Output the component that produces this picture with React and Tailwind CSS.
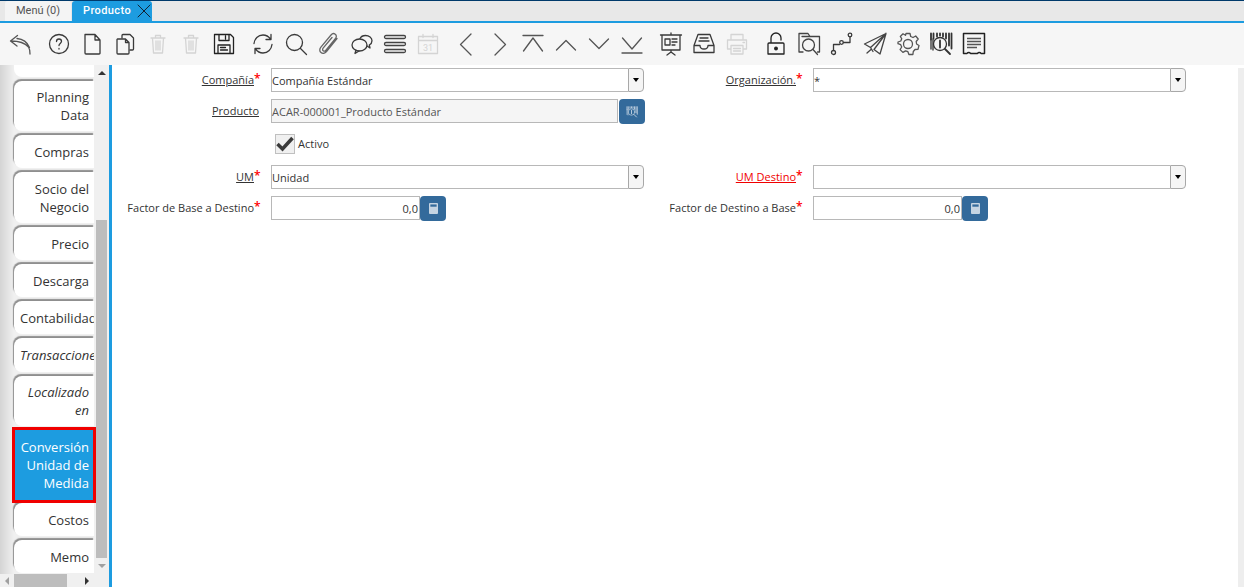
import React from "react";

const S = { fill: "none", stroke: "currentColor", strokeWidth: 1.3, strokeLinecap: "round", strokeLinejoin: "round" };

const Svg = ({ children, className = "text-[#3a3a3a]" }) => (
  <svg viewBox="0 0 24 24" className={`w-6 h-6 ${className}`} {...S}>
    {children}
  </svg>
);

const Trash = () => (
  <Svg className="text-[#d4d4d4]">
    <path d="M5 6h14M9.500 6V3.500h5V6M6.500 6l1 15h9l1-15M10 9v9M12 9v9M14 9v9" />
  </Svg>
);

const icons = {
  undo: <Svg className="text-[#555]"><path d="M9.500 3.500 2.500 9l6.500 5M3 9c8 0 14 2 17.500 6 1 1.500 1.500 5 1.500 7M9 6.500c6 .5 10 3 12.500 9" /></Svg>,
  help: <Svg><circle cx="12" cy="12" r="9.500" /><path d="M9.500 9.500C9.500 7.800 10.800 7 12 7s2.500.9 2.500 2.300c0 2-2.500 2.200-2.500 4.200" /><path d="M12 16.500v.5" /></Svg>,
  file: <Svg><path d="M5 2.500h10L20 8v13a.9.9 0 0 1-1 1H6a1 1 0 0 1-1-1zM15 2.500V8h5" /></Svg>,
  copy: <Svg><path d="M9 6V3.500a1 1 0 0 1 1-1h7l3.500 3.500v11a1 1 0 0 1-1 1H17" /><path d="M4.500 7h8L16 10.500V21a1 1 0 0 1-1 1H5a1 1 0 0 1-1-1V7.500zM12.500 7v3.500H16" /></Svg>,
  trash: <Trash />,
  save: <Svg className="text-[#222]"><path d="M2.500 2.500h16l3 3v16h-19zM7 2.500v6h10v-6M13.500 4v3M6 21.500V13h12v8.500M8.500 15.500h5M8.500 18h7" /></Svg>,
  refresh: <Svg><path d="M3 11.500C3.500 7 7 3 12 3c3 0 5.500 1.300 7.500 4M20 2.500V7.500h-5M21 12.500c-.5 4.500-4 8.500-9 8.500-3 0-5.500-1.300-7.500-4M4 21.500V16.500h5" /></Svg>,
  search: <Svg><circle cx="10.500" cy="10.500" r="8" /><path d="m16.500 16.500 6 6" /></Svg>,
  clip: <Svg className="text-[#666]"><path d="M20 6.500 9.500 19.500c-1.600 2-4 2.300-5.500 1.100s-1.700-3.500-.1-5.500L14 3c1.200-1.500 3-1.800 4.300-.8s1.400 2.800.2 4.300L8.700 18.300c-.7.900-1.800 1-2.500.5s-.8-1.700-.1-2.600L15 5.500" /></Svg>,
  chat: <Svg><ellipse cx="9.500" cy="13" rx="7.500" ry="6" /><path d="m6 18-1 3.500 4-2.500M10 6.500C11 4.500 13 3.500 15.500 3.500c3.600 0 6.500 2.300 6.500 5.200 0 1.900-1 3.300-2.700 4.300l.7 3-3-2" /></Svg>,
  lines: <Svg className="text-[#444]"><rect x="1.500" y="3.500" width="21" height="3" rx="1.500" /><rect x="1.500" y="10.500" width="21" height="3" rx="1.500" /><rect x="1.500" y="17.500" width="21" height="3" rx="1.500" /></Svg>,
  calendar: <Svg className="text-[#d4d4d4]"><path d="M2.500 4.500h19v17h-19zM2.500 8.500h19M7 2.500v3M17 2.500v3" /><text x="12" y="19" fontSize="9" textAnchor="middle" fill="currentColor" stroke="none" fontFamily="Roboto, sans-serif">31</text></Svg>,
  prev: <Svg className="text-[#555]"><path d="M16 2 5.500 12.500 16 23" /></Svg>,
  next: <Svg className="text-[#555]"><path d="M7 2l10.500 10.500L7 23" /></Svg>,
  first: <Svg className="text-[#555]"><path d="M2 3.500h20M2.500 19 12 6l9.500 13" /></Svg>,
  up: <Svg className="text-[#555]"><path d="M2.500 18 12 8.500l9.500 9.500" /></Svg>,
  down: <Svg className="text-[#555]"><path d="M2.500 7 12 16.500 21.500 7" /></Svg>,
  last: <Svg className="text-[#555]"><path d="M2.500 6 12 17l9.500-11M2 21h20" /></Svg>,
  present: <Svg><path d="M1.500 3h21M3 3v15h18V3M12 1v2M12 18v2M8 23l4-3 4 3" /><path d="M6 7h5v6H6zM13 7h5M13 10h5M13 13h3" /></Svg>,
  archive: <Svg><path d="M6 2.500h12l4 11v7H2v-7zM2 13.500h6c0 2 1.500 3.500 4 3.500s4-1.500 4-3.500h6M8 6h8M7 9h10" /></Svg>,
  print: <Svg className="text-[#d4d4d4]"><path d="M6 8V2.500h12V8M6 17H2.500V8h19v9H18M6 13.500h12V22H6zM8.500 16.500h7M8.500 19h7M18 10.500h1.500" /></Svg>,
  lock: <Svg className="text-[#222]"><path d="M5 11h14a1 1 0 0 1 1 1v10H4V12a1 1 0 0 1 1-1zM7 11V6a5 5 0 0 1 10 0v2" /><circle cx="12" cy="16.500" r="1.300" fill="currentColor" /></Svg>,
  folder: <Svg className="text-[#444]"><path d="M6 20H2V1.500h9l2 3h9.500V20h-2M5 4.500h8" /><circle cx="11.500" cy="13" r="6" /><path d="m16 17.500 4.500 5" /></Svg>,
  route: <Svg><circle cx="3.500" cy="20.500" r="2" /><circle cx="11.500" cy="10.500" r="1.800" /><circle cx="20" cy="3" r="1.800" /><path d="M3.500 18.500V12.500h6M13.500 10.500H20V5" /></Svg>,
  send: <Svg className="text-[#444]"><path d="M23 1.500 1.500 12l6 3.500 2.500 4M23 1.500 17 22l-6-4.500M23 1.500 7.500 15.500M23 1.500 11 17.500M4 21l4-3.500" /></Svg>,
  gear: <Svg className="text-[#555]"><circle cx="12" cy="12" r="4.500" /><path d="M10 1.500h4l.7 3 2.300 1 2.700-1.500 2.500 3-2 2.500.4 2.500 2.400 1.500-1 3.800-3 .2-1.700 2-.4 3h-4l-1-2.800-2.300-.8-2.700 1.500-2.800-2.800 1.600-2.600-1-2.300-2.700-1V10l2.800-1 .9-2.300L4.300 4.500 7 1.800l2.500 1.500z" /></Svg>,
  barcode: <Svg className="text-[#333]"><path d="M2 1.500v6M4.500 1.500v5M8 1.500v3M11 1.500v2M14 1.500v3M17 1.500v5M20 1.500v12M22.500 1.500v15" strokeWidth="1.800" /><path d="M2 8v9M4 7v11" /><circle cx="11" cy="12" r="6.500" /><path d="M11 8.500v7M16 17l5 5" strokeWidth="1.800" /></Svg>,
  receipt: <Svg className="text-[#222]"><path d="M1.500 1.500h21v20h-3.500a2 2 0 0 0-3.500 0h-7a2 2 0 0 0-3.500 0H1.500z" strokeWidth="1.500" /><path d="M5 6.500h14M5 9.500h14M5 12.500h14M5 15.500h10" strokeWidth="1.700" strokeLinecap="butt" className="text-[#555]" /></Svg>,
};

const groups = [
  ["undo"],
  ["help", "file", "copy", "trash", "trash", "save"],
  ["refresh", "search", "clip", "chat", "lines", "calendar"],
  ["prev", "next", "first", "up", "down", "last"],
  ["present", "archive", "print"],
  ["lock", "folder", "route", "send", "gear", "barcode", "receipt"],
];

const tabs = [
  { h: "h-[50px]", t: "Planning\nData" },
  { h: "h-[33px]", t: "Compras" },
  { h: "h-[51px]", t: "Socio del\nNegocio" },
  { h: "h-[33px]", t: "Precio" },
  { h: "h-[33px]", t: "Descarga" },
  { h: "h-[33px]", t: "Contabilidad", clip: true },
  { h: "h-[34px]", t: "Transacciones", clip: true, it: true },
  { h: "h-[50px]", t: "Localizado\nen", it: true },
];

const Tab = ({ h, t, clip, it }) => (
  <div
    className={`${h} shrink-0 mr-[2px] bg-white rounded-l-lg shadow-[-1px_-2px_1px_#8f8f8f] flex items-center overflow-hidden leading-[18px] text-[13px] text-[#333] ${clip ? "pl-[6px] whitespace-nowrap justify-start" : "whitespace-pre-line pr-[5px] justify-end text-right"} ${it ? "italic" : ""}`}
  >
    <span className="shrink-0">{t}</span>
  </div>
);

const Caret = () => (
  <div className="w-4 h-full shrink-0 bg-[#f5f5f5] border border-[#a8a8a8] rounded-r-[4px] flex items-center justify-center">
    <div className="w-0 h-0 border-x-[3px] border-x-transparent border-t-[4px] border-t-black" />
  </div>
);

const Combo = ({ value }) => (
  <div className="h-6 flex">
    <div className="flex-1 border border-[#b8b8b8] border-r-0 bg-white pt-[3px] text-[11px] text-[#333] flex items-center">{value}</div>
    <Caret />
  </div>
);

const Label = ({ children, link, red, star = true }) => (
  <div className={`h-6 flex items-center justify-end text-[11px] text-[#333] ${star ? "pr-[5px]" : ""}`}>
    <span className={`${link ? "underline" : ""} ${red ? "text-[#f00000]" : ""}`}>{children}</span>
    {star && <span className="w-0 text-[#f00] text-[12px] font-semibold leading-none -mt-[3px]">*</span>}
  </div>
);

const Calc = () => (
  <svg viewBox="0 0 10 12" className="w-[9px] h-[11px]">
    <rect width="10" height="12" rx="1" fill="#c5d4e2" />
    <rect x="1.500" y="1.500" width="7" height="2.500" fill="#336a9b" />
  </svg>
);

const Num = () => (
  <div className="h-6 flex">
    <div className="w-[149px] border border-[#b8b8b8] bg-white pr-[1px] pt-[3px] text-[11px] text-[#333] flex items-center justify-end">0,0</div>
    <div className="w-[26px] h-[25px] bg-[#336a9b] rounded-[4px] flex items-center justify-center"><Calc /></div>
  </div>
);

export default function App() {
  return (
    <div className="w-[1244px] h-[587px] overflow-hidden flex flex-col bg-white font-['Open_Sans',sans-serif] border-t border-[#003a6b]">
      {/* tabs */}
      <div className="h-[22px] shrink-0 bg-[#e8e8e8] border-b-2 border-[#1d9ce0] flex items-end pl-[5px] gap-[1px] font-['Roboto',sans-serif] text-[11px]">
        <div className="w-[66px] h-[20px] bg-[#f4f4f4] rounded-t-[3px] text-[#555] flex items-center justify-center">Menú (0)</div>
        <div className="w-[80px] h-[20px] bg-[#1d9ce0] rounded-t-[3px] text-white font-medium flex items-center pl-[11px] tracking-[0.4px]">
          Producto
          <svg viewBox="0 0 14 14" className="w-[14px] h-[14px] ml-auto mr-[1px] text-[#123]" {...S} strokeWidth="1"><path d="m1 1 12 12M13 1 1 13" /></svg>
        </div>
      </div>
      {/* toolbar */}
      <div className="h-[42px] shrink-0 bg-[#f6f6f6] flex items-center pl-[3px] gap-[6px]">
        {groups.map((g, i) => (
          <div key={i} className="flex">
            {g.map((n, j) => (
              <div key={j} className="w-[33px] flex justify-center">{icons[n]}</div>
            ))}
          </div>
        ))}
      </div>
      <div className="flex-1 flex min-h-0">
        {/* sidebar */}
        <div className="w-[109px] shrink-0 flex flex-col">
          <div className="flex-1 flex min-h-0">
            <div className="w-[96px] shrink-0 pl-[14px] bg-[linear-gradient(to_right,#d4d4d4,#f0f0f0_14px)] flex flex-col gap-[4px] overflow-hidden">
              <div className="h-[12px] mr-[2px] shrink-0 bg-white rounded-bl-lg" />
              {tabs.map((t) => <Tab key={t.t} {...t} />)}
              <div className="h-[76px] -ml-[2px] -mt-[3px] -mb-[4px] shrink-0 bg-[#1d9ce0] border-[3px] border-[#f00000] text-white font-medium text-[13px] leading-[18px] flex items-center justify-end text-right pr-[4px] whitespace-pre-line relative">
                {"Conversión\nUnidad de\nMedida"}
              </div>
              <Tab h="h-[33px]" t="Costos" />
              <Tab h="h-[33px]" t="Memo" />
            </div>
            <div className="flex-1 bg-[#f0f0f0] flex flex-col">
              <div className="h-[16px] -ml-[2px] flex items-center justify-center"><div className="w-0 h-0 border-x-[4px] border-x-transparent border-b-[4px] border-b-[#333]" /></div>
              <div className="flex-1 flex flex-col justify-end">
                <div className="h-[338px] w-[11px] bg-[#bdbdbd]" />
              </div>
              <div className="h-[16px] -ml-[2px] flex items-center justify-center"><div className="w-0 h-0 border-x-[4px] border-x-transparent border-t-[4px] border-t-[#a0a0a0]" /></div>
            </div>
          </div>
          <div className="h-[13px] shrink-0 bg-[#f0f0f0] flex items-center">
            <div className="w-[14px] flex justify-center"><div className="w-0 h-0 border-y-[4px] border-y-transparent border-r-[4px] border-r-[#a0a0a0]" /></div>
            <div className="w-[53px] h-full bg-[#bdbdbd]" />
            <div className="w-[24px] flex justify-end pr-[2px]"><div className="w-0 h-0 border-y-[4px] border-y-transparent border-l-[4px] border-l-[#333]" /></div>
          </div>
        </div>
        {/* form */}
        <div className="flex-1 border-l-[3px] border-[#1d9ce0] pt-[3px] flex">
          <div className="flex-1">
            <div className="grid grid-cols-[147px_373px_145px_373px] gap-x-[12px] gap-y-[7px] auto-rows-min">
              <Label link>Compañía</Label>
              <Combo value="Compañía Estándar" />
              <Label link>Organización.</Label>
              <Combo value="*" />

              <Label link star={false}>Producto</Label>
              <div className="h-6 flex">
                <div className="w-[347px] border border-[#b8b8b8] bg-[#f5f5f5] pt-[3px] text-[11px] text-[#555] flex items-center">ACAR-000001_Producto Estándar</div>
                <div className="w-[26px] h-[25px] ml-[1px] -mr-[1px] bg-[#336a9b] rounded-[4px] flex items-center justify-center">
                  <div className="scale-50 origin-center">{React.cloneElement(icons.barcode, { className: "text-[#c5d4e2]" })}</div>
                </div>
              </div>
              <div />
              <div />

              <div />
              <div className="h-7 flex items-center pl-[4px]">
                <div className="w-5 h-5 bg-[#f0f0f0] border border-[#c0c0c0] flex items-center justify-center">
                  <svg viewBox="0 0 20 20" className="w-5 h-5 shrink-0 text-[#3a3a3a]" fill="none" stroke="currentColor" strokeWidth="3.500"><path d="m2.500 10 5 5 10-11" /></svg>
                </div>
                <span className="ml-[3px] text-[11px] text-[#333]">Activo</span>
              </div>
              <div />
              <div />

              <Label link>UM</Label>
              <Combo value="Unidad" />
              <Label link red>UM Destino</Label>
              <Combo value="" />

              <Label>Factor de Base a Destino</Label>
              <Num />
              <Label>Factor de Destino a Base</Label>
              <Num />
            </div>
          </div>
          <div className="w-[6px] shrink-0 bg-[#eeeeee]" />
        </div>
      </div>
    </div>
  );
}
